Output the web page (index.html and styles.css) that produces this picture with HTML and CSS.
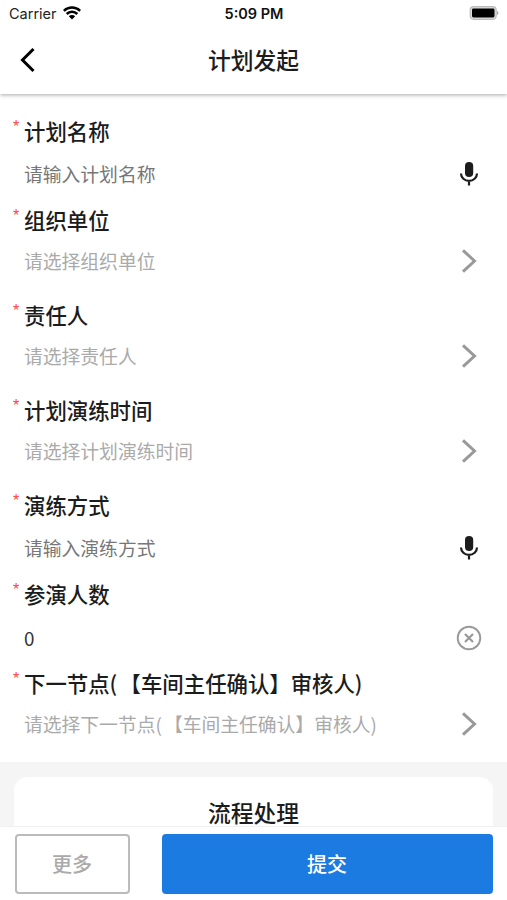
FILE: index.html
```html
<!DOCTYPE html>
<html lang="zh-CN">
<head>
<meta charset="utf-8">
<title>计划发起</title>
<link rel="stylesheet" href="styles.css">
</head>
<body>
<svg class="defs" width="0" height="0">
  <symbol id="mic" viewBox="0 0 20 26"><rect x="6" y="1" width="8.200" height="15" rx="4.100" fill="#1c1c1c"/><path d="M2 12.500a8 7.400 0 0 0 16 0M10 19.500V24.500" fill="none" stroke="#1c1c1c" stroke-width="2.200"/></symbol>
  <symbol id="arrow" viewBox="0 0 20 26"><path d="M4 2.300 15.500 13 4 23.700" fill="none" stroke="#999" stroke-width="3"/></symbol>
  <symbol id="clear" viewBox="0 0 26 26"><circle cx="13" cy="13" r="11.300" fill="none" stroke="#999" stroke-width="1.900"/><path d="m9 9 8 8m0-8-8 8" stroke="#999" stroke-width="2.200"/></symbol>
</svg>
<div class="app">
  <div class="status">
    <div class="carrier"><span>Carrier</span>
      <svg width="18" height="14" viewBox="0 0 18 14"><g fill="none" stroke="#000" stroke-width="2.500"><path d="M.8 4.900a11.600 11.600 0 0 1 16.400 0"/><path d="M3.700 8a7.500 7.500 0 0 1 10.600 0"/></g><path d="M5.800 10.200a4.600 4.600 0 0 1 6.400 0L9 13.600z"/></svg>
    </div>
    <div class="time">5:09 PM</div>
    <svg class="battery" width="31" height="14" viewBox="0 0 31 14"><rect x="2.200" y=".7" width="26" height="12.600" rx="3.500" fill="#ddd" stroke="#bbb" stroke-width="1.200"/><rect x="4" y="2.500" width="22.500" height="9" rx="1.400"/><path d="M29 4.800q3 2.200 0 4.400z" fill="#aaa"/></svg>
  </div>
  <header class="nav">
    <svg class="back" width="16" height="26" viewBox="0 0 16 26"><path d="M13.500 2 2.500 13l11 11" fill="none" stroke="#000" stroke-width="3"/></svg>
    <h1>计划发起</h1>
  </header>
  <main class="content">
    <form class="form">
      <div class="field"><label><i>*</i>计划名称</label><div class="value"><span>请输入计划名称</span><svg class="icon"><use href="#mic"/></svg></div></div>
      <div class="field select"><label><i>*</i>组织单位</label><div class="value"><span>请选择组织单位</span><svg class="icon"><use href="#arrow"/></svg></div></div>
      <div class="field select"><label><i>*</i>责任人</label><div class="value"><span>请选择责任人</span><svg class="icon"><use href="#arrow"/></svg></div></div>
      <div class="field select"><label><i>*</i>计划演练时间</label><div class="value"><span>请选择计划演练时间</span><svg class="icon"><use href="#arrow"/></svg></div></div>
      <div class="field"><label><i>*</i>演练方式</label><div class="value"><span>请输入演练方式</span><svg class="icon"><use href="#mic"/></svg></div></div>
      <div class="field number"><label><i>*</i>参演人数</label><div class="value"><span>0</span><svg class="icon"><use href="#clear"/></svg></div></div>
      <div class="field select"><label><i>*</i>下一节点<b>(</b>【车间主任确认】审核人)</label><div class="value"><span>请选择下一节点<b>(</b>【车间主任确认】审核人)</span><svg class="icon"><use href="#arrow"/></svg></div></div>
    </form>
    <section class="process"><div class="card">流程处理</div></section>
  </main>
  <footer class="actions">
    <button class="more">更多</button>
    <button class="submit">提交</button>
  </footer>
</div>
</body>
</html>
```
FILE: styles.css
```css
* { box-sizing: border-box; }
body { margin: 0; background: #fff; color: #1c1c1c; font-family: "Noto Sans CJK SC", sans-serif; text-spacing-trim: space-all; }
.defs { position: absolute; }
.app { height: 900px; overflow: hidden; display: flex; flex-direction: column; }
.status { height: 27px; flex: none; padding: 0 8px 0 9px; display: grid; grid-template-columns: 1fr auto 1fr; align-items: center; font-family: Inter, sans-serif; font-size: 14.500px; line-height: 27px; color: #222; background: #fff; z-index: 2; }
.carrier { display: flex; align-items: center; gap: 6px; }
.carrier svg { margin-top: -2px; }
.time { font-weight: 600; color: #111; }
.battery { justify-self: end; margin-top: -1px; }
.nav { height: 67px; flex: none; padding: 0 20px 2px; display: grid; grid-template-columns: 1fr auto 1fr; align-items: center; box-shadow: 0 1px 4px rgba(0, 0, 0, .35); z-index: 1; }
.nav h1 { margin: 0; font-size: 22.800px; font-weight: 500; line-height: 65px; }
.content { flex: 1; min-height: 0; overflow: hidden; display: flex; flex-direction: column; }
.form { height: 668px; flex: none; padding: 22px 24px 0; }
.field { height: 89px; }
.field.select { height: 95px; }
.field label { display: block; height: 32px; line-height: 30px; font-size: 21.400px; font-weight: 500; white-space: nowrap; }
.field i { display: inline-block; width: 11px; margin-left: -11px; font: 16px/16px "Liberation Sans", sans-serif; color: #f44; vertical-align: 8px; }
.field b { font-weight: inherit; letter-spacing: .11em; }
.value { height: 52px; display: flex; align-items: center; justify-content: space-between; font-size: 18.800px; color: #777; }
.select .value { height: 48px; color: #aaa; }
.number .value { height: 54px; font-family: "Noto Sans CJK SC", sans-serif; color: #333; }
.value span { white-space: nowrap; padding-bottom: 2px; }
.icon { width: 20px; height: 26px; flex: none; margin-right: 4px; }
.number .icon { width: 26px; margin-right: 1px; }
.process { flex: 1; padding: 15px 14px 0; background: #f5f5f5; }
.card { height: 120px; border-radius: 14px; background: #fff; text-align: center; font-size: 22.800px; font-weight: 500; line-height: 72px; }
.actions { height: 74px; flex: none; display: flex; gap: 32px; padding: 7px 14px 6px 15px; border-top: 1px solid #f0f0f0; background: #fff; z-index: 1; }
button { height: 60px; border-radius: 4px; font-family: inherit; font-size: 20px; font-weight: 500; padding: 0 1px 2px 0; }
.more { width: 115px; border: 2px solid #bbb; background: #fff; color: #aaa; }
.submit { flex: 1; border: 0; background: #1b7be0; color: #fff; }
```
